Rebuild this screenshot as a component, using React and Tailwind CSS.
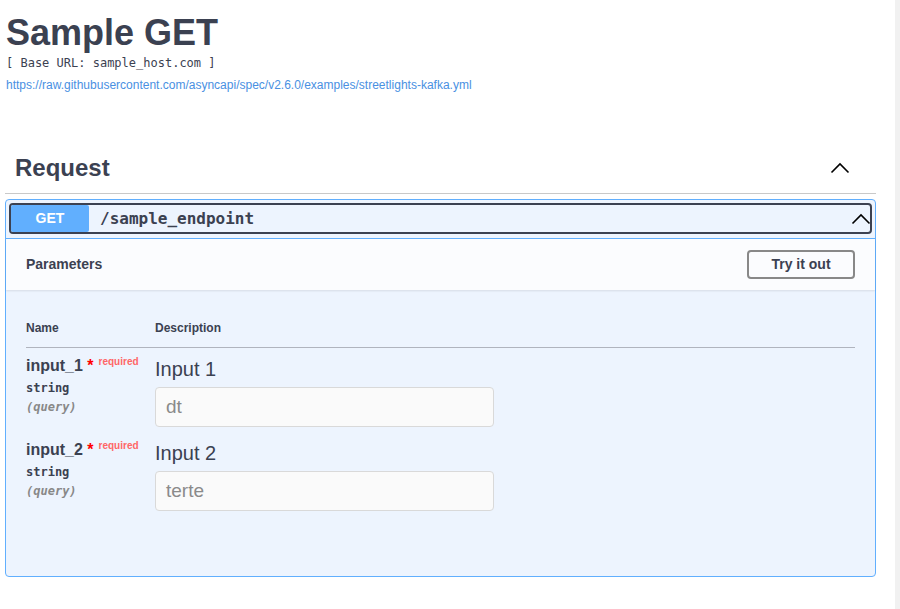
import { useState } from "react";

const params = [
  { name: "input_1", type: "string", location: "query", label: "Input 1", value: "dt" },
  { name: "input_2", type: "string", location: "query", label: "Input 2", value: "terte" },
];

function Chevron({ className }) {
  return (
    <svg viewBox="0 0 20 20" className={className} fill="none" stroke="#000" strokeWidth="1.6">
      <path d="M1.5 14.5 L10 6 L18.5 14.5" />
    </svg>
  );
}

const ParamRow = ({ param }) => {
  return (
    <div className="flex pt-[8px] pb-[5px]">
      {/* name column */}
      <div className="w-[129px] shrink-0">
        <div className="text-[16px] leading-[20px] font-bold whitespace-nowrap">
          {param.name}
          <span className="text-[#f00]">&nbsp;*</span>
          <span className="relative top-[-6px] pl-[5px] text-[10px] font-bold text-[#ff6666]">required</span>
        </div>
        <div className="font-['DejaVu_Sans_Mono',monospace] text-[12px] leading-[20px] font-bold">
          {param.type}
        </div>
        <div className="font-['DejaVu_Sans_Mono',monospace] text-[12px] leading-[18px] font-bold italic text-[#888]">
          ({param.location})
        </div>
      </div>
      {/* description column */}
      <div className="mt-[1px]">
        <div className="text-[20px] leading-[24px]">{param.label}</div>
        <div className="mt-[6px] flex h-[40px] w-[339px] items-center rounded-[4px] border border-[#d9d9d9] bg-[#fafafa] pl-[10px] text-[19px] text-[#8a8a8a]">
          {param.value}
        </div>
      </div>
    </div>
  );
};

const App = () => {
  const [open, setOpen] = useState(true);

  return (
    <div className="flex min-h-[609px] bg-white font-['Liberation_Sans',Arial,sans-serif] text-[#3b4151]">
      <div className="flex-1 pl-[5px] pr-[19px]">
        {/* BEGIN: Info */}
        <div className="pl-[1px]">
          <h1 className="mt-[15px] text-[36px] leading-[36px] font-bold">Sample GET</h1>
          <div className="mt-[4px] font-['DejaVu_Sans_Mono',monospace] text-[12px] leading-[16px]">
            [ Base URL: sample_host.com ]
          </div>
          <a className="mt-[6px] block text-[12px] leading-[16px] text-[#4990e2]" href="#">
            https://raw.githubusercontent.com/asyncapi/spec/v2.6.0/examples/streetlights-kafka.yml
          </a>
        </div>
        {/* END: Info */}

        {/* BEGIN: Request tag */}
        <div className="mt-[61px] flex items-center justify-between border-b border-[#c9c9c9] pb-[11px] pl-[10px] pr-[26px]">
          <h2 className="text-[24px] leading-[28px] font-bold">Request</h2>
          <Chevron className="h-[20px] w-[20px]" />
        </div>
        {/* END: Request tag */}

        {/* BEGIN: Operation */}
        <div className="mt-[5px] rounded-[4px] border border-[#61affe] bg-[#edf4fe]">
          <div className="border-b border-[#61affe] px-[3px] pt-[3px] pb-[4px]">
            <button
              onClick={() => setOpen(!open)}
              className="flex h-[31px] w-full items-center rounded-[4px] border-2 border-[#3b4151] p-0"
            >
              <span className="flex h-full w-[78px] items-center justify-center rounded-[2px] bg-[#61affe] text-[14px] font-bold text-white">
                GET
              </span>
              <span className="ml-[11px] font-['DejaVu_Sans_Mono',monospace] text-[16px] font-bold">
                /sample_endpoint
              </span>
              <Chevron className="ml-auto mr-[-1px] h-[20px] w-[20px]" />
            </button>
          </div>

          {open && (
            <>
              <div className="flex h-[51px] items-center justify-between bg-[#fbfcfe] px-[20px] shadow-[0_1px_2px_rgba(0,0,0,0.1)]">
                <span className="text-[14px] font-bold">Parameters</span>
                <button className="h-[29px] w-[108px] rounded-[4px] border-2 border-[#888] text-[14px] font-bold">
                  Try it out
                </button>
              </div>

              <div className="px-[20px] pt-[30px] pb-[60px]">
                <div className="flex border-b border-[#b0b4be] pb-[11px] text-[12px] leading-[16px] font-bold">
                  <div className="w-[129px]">Name</div>
                  <div>Description</div>
                </div>
                {params.map((p) => (
                  <ParamRow key={p.name} param={p} />
                ))}
              </div>
            </>
          )}
        </div>
        {/* END: Operation */}
      </div>
      <div className="w-[5px] bg-[#f1f1f1]" />
    </div>
  );
};

export default App;
